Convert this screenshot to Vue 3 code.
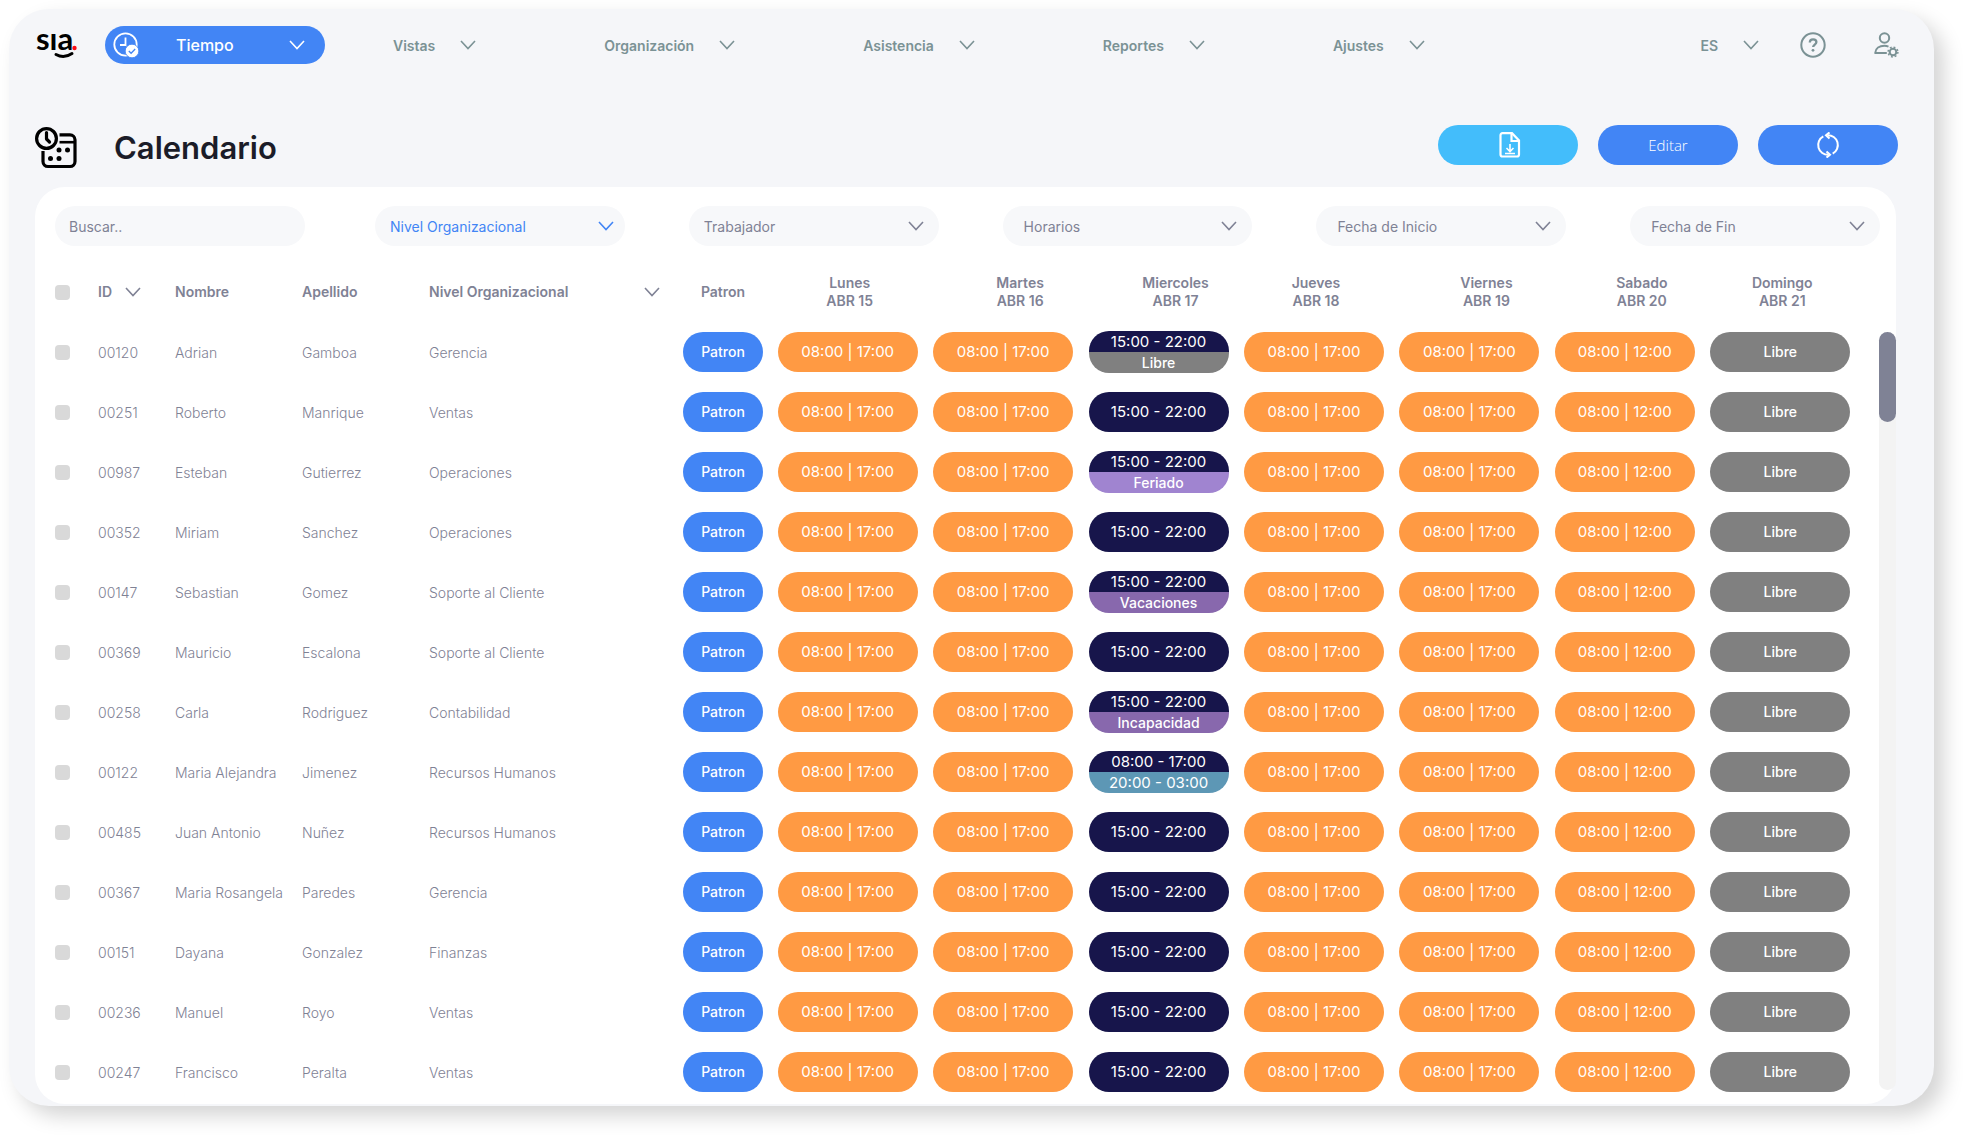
<script setup>
import { ref } from 'vue'

const menu = ['Vistas', 'Organización', 'Asistencia', 'Reportes', 'Ajustes']

const filters = [
  { id: 'nivel', label: 'Nivel Organizacional', kind: 'active' },
  { id: 'trabajador', label: 'Trabajador', kind: '' },
  { id: 'horarios', label: 'Horarios', kind: 'inset' },
  { id: 'inicio', label: 'Fecha de Inicio', kind: 'inset' },
  { id: 'fin', label: 'Fecha de Fin', kind: 'inset' },
]

const days = [
  { name: 'Lunes', date: 'ABR 15', shifted: false },
  { name: 'Martes', date: 'ABR 16', shifted: true },
  { name: 'Miercoles', date: 'ABR 17', shifted: true },
  { name: 'Jueves', date: 'ABR 18', shifted: false },
  { name: 'Viernes', date: 'ABR 19', shifted: true },
  { name: 'Sabado', date: 'ABR 20', shifted: true },
  { name: 'Domingo', date: 'ABR 21', shifted: false },
]

const night = '15:00 - 22:00'
const people = [
  ['00120', 'Adrian', 'Gamboa', 'Gerencia', night, 'Libre', 'free'],
  ['00251', 'Roberto', 'Manrique', 'Ventas', night],
  ['00987', 'Esteban', 'Gutierrez', 'Operaciones', night, 'Feriado', 'holiday'],
  ['00352', 'Miriam', 'Sanchez', 'Operaciones', night],
  ['00147', 'Sebastian', 'Gomez', 'Soporte al Cliente', night, 'Vacaciones', 'leave'],
  ['00369', 'Mauricio', 'Escalona', 'Soporte al Cliente', night],
  ['00258', 'Carla', 'Rodriguez', 'Contabilidad', night, 'Incapacidad', 'leave'],
  ['00122', 'Maria Alejandra', 'Jimenez', 'Recursos Humanos', '08:00 - 17:00', '20:00 - 03:00', 'extra'],
  ['00485', 'Juan Antonio', 'Nuñez', 'Recursos Humanos', night],
  ['00367', 'Maria Rosangela', 'Paredes', 'Gerencia', night],
  ['00151', 'Dayana', 'Gonzalez', 'Finanzas', night],
  ['00236', 'Manuel', 'Royo', 'Ventas', night],
  ['00247', 'Francisco', 'Peralta', 'Ventas', night],
].map(([id, name, surname, level, shift, second, tone]) => ({
  id, name, surname, level,
  week: [
    { text: '08:00 | 17:00', tone: 'day' },
    { text: '08:00 | 17:00', tone: 'day' },
    { text: shift, tone: 'night', second, secondTone: tone },
    { text: '08:00 | 17:00', tone: 'day' },
    { text: '08:00 | 17:00', tone: 'day' },
    { text: '08:00 | 12:00', tone: 'day' },
    { text: 'Libre', tone: 'free' },
  ],
}))

const search = ref('')
</script>

<template>
  <div class="shell">
    <header class="topbar">
      <svg class="logo" width="44" height="52" viewBox="0 0 44 52" role="img" aria-label="sia">
        <text x="1" y="31" class="logo-text">sıa</text>
        <path d="M21 35.500 Q29 40 37 34.500" fill="none" stroke="#000" stroke-width="3" stroke-linecap="round" />
        <circle cx="39.500" cy="29" r="2.200" fill="#fb0d16" />
      </svg>
      <button class="module" type="button">
        <svg width="26" height="26" viewBox="0 0 26 26" fill="none">
          <circle cx="12.500" cy="12.500" r="11.200" stroke="#fff" stroke-width="1.800" />
          <path d="M12.500 5.500V13H7" stroke="#fff" stroke-width="1.800" />
          <circle cx="19" cy="19" r="6.800" fill="#fff" stroke="#4285f5" stroke-width="0.800" />
          <path d="M15.800 19l2.300 2.300 4.100-4.300" stroke="#4285f5" stroke-width="1.300" />
        </svg>
        <span class="module-name">Tiempo</span>
        <svg class="chevron" viewBox="0 0 16 10"><path d="M1 1l7 7.500L15 1" /></svg>
      </button>
      <nav class="menu">
        <button v-for="item in menu" :key="item" class="menu-item" type="button">
          {{ item }}
          <svg class="chevron" viewBox="0 0 16 10"><path d="M1 1l7 7.500L15 1" /></svg>
        </button>
      </nav>
      <div class="account">
        <button class="menu-item" type="button">
          ES
          <svg class="chevron" viewBox="0 0 16 10"><path d="M1 1l7 7.500L15 1" /></svg>
        </button>
        <button class="icon-button help" type="button" aria-label="Ayuda">
          <svg width="26" height="26" viewBox="0 0 26 26" fill="none" stroke="currentColor" stroke-width="2">
            <circle cx="13" cy="13" r="11.700" />
            <path d="M9.800 10.600c0-2 1.400-3.300 3.300-3.300s3.300 1.100 3.300 2.800c0 2.400-3.300 2.500-3.300 5" stroke-width="2.300" />
            <circle cx="13" cy="18.300" r="1.400" fill="currentColor" stroke="none" />
          </svg>
        </button>
        <button class="icon-button" type="button" aria-label="Cuenta">
          <svg width="26" height="26" viewBox="0 0 26 26" fill="none" stroke="currentColor" stroke-width="2">
            <circle cx="11.500" cy="6" r="4.700" />
            <path d="M15.500 14.600c-1.200-.5-2.500-.8-4-.8-5 0-9 2.600-9.300 7.200h11.600" stroke-linejoin="round" />
            <circle cx="20" cy="20" r="3.300" stroke-width="2" />
            <circle cx="20" cy="20" r="4.900" stroke-width="1.500" stroke-dasharray="1.900 1.948" />
          </svg>
        </button>
      </div>
    </header>

    <section class="heading">
      <div class="title">
        <svg width="42" height="42" viewBox="0 0 42 42" fill="none" stroke="#000" stroke-width="3.200">
          <circle cx="11.500" cy="11.500" r="9.900" />
          <path d="M11.500 5.500v6.500l3 3" stroke-linecap="round" stroke-linejoin="round" />
          <path d="M24.500 7.800H35a5 5 0 0 1 5 5V34.500a5 5 0 0 1-5 5H13a5 5 0 0 1-5-5V24" />
          <path d="M24.500 15.200H40" stroke-width="2.600" />
          <g fill="#000" stroke="none">
            <circle cx="24" cy="23" r="2.500" /><circle cx="32.500" cy="23" r="2.500" />
            <circle cx="15.500" cy="31.500" r="2.500" /><circle cx="24" cy="31.500" r="2.500" />
          </g>
        </svg>
        <h1>Calendario</h1>
      </div>
      <div class="actions">
        <button class="action light" type="button" aria-label="Descargar">
          <svg width="26" height="26" viewBox="-4 0 26 26" fill="none" stroke="#fff" stroke-width="2.200">
            <path d="M3.500 1.200H13L20 8.500V22.500a2 2 0 0 1-2 2H3.500a2 2 0 0 1-2-2V3.200a2 2 0 0 1 2-2z" />
            <path d="M12.500 1.500V9H20" />
            <path d="M11 12v7M7.500 16l3.500 3.500 3.500-3.500M6 21.500h10" stroke-width="1.600" />
          </svg>
        </button>
        <button class="action" type="button">Editar</button>
        <button class="action" type="button" aria-label="Actualizar">
          <svg width="24" height="26" viewBox="0 0 24 26" fill="none" stroke="#fff" stroke-width="2">
            <path d="M7.300 4.400A9.800 9.800 0 0 0 12.500 22.800" />
            <path d="M11.500 3.200A9.800 9.800 0 0 1 16.700 21.600" />
            <path d="M13.500 .4l-3.500 2.900 3.500 3.100M10.500 25.600l3.500-2.900-3.500-3.100" />
          </svg>
        </button>
      </div>
    </section>

    <main class="panel">
      <form class="filters" @submit.prevent>
        <input v-model="search" class="field" type="search" placeholder="Buscar.." aria-label="Buscar" />
        <div class="selects">
          <div v-for="f in filters" :key="f.id" class="select" :class="f.kind">
            <select class="field" :id="f.id" :aria-label="f.label">
              <option>{{ f.label }}</option>
            </select>
            <svg class="chevron" viewBox="0 0 16 10"><path d="M1 1l7 7.500L15 1" /></svg>
          </div>
        </div>
      </form>

      <div class="board">
        <table>
          <colgroup>
            <col class="c-check" /><col class="c-id" /><col class="c-name" /><col class="c-name" />
            <col class="c-level" /><col class="c-pattern" />
            <col v-for="d in days" :key="d.date" />
          </colgroup>
          <thead>
            <tr>
              <th><input type="checkbox" aria-label="Seleccionar todos" /></th>
              <th>
                <div class="sort id">ID <svg class="chevron" viewBox="0 0 16 10"><path d="M1 1l7 7.500L15 1" /></svg></div>
              </th>
              <th>Nombre</th>
              <th>Apellido</th>
              <th>
                <div class="sort level">
                  Nivel Organizacional
                  <svg class="chevron" viewBox="0 0 16 10"><path d="M1 1l7 7.500L15 1" /></svg>
                </div>
              </th>
              <th class="center">Patron</th>
              <th v-for="d in days" :key="d.date" class="center weekday" :class="{ shifted: d.shifted }">
                {{ d.name }}<br />{{ d.date }}
              </th>
            </tr>
          </thead>
          <tbody>
            <tr v-for="p in people" :key="p.id">
              <td><input type="checkbox" :aria-label="'Seleccionar ' + p.name" /></td>
              <td>{{ p.id }}</td>
              <td>{{ p.name }}</td>
              <td>{{ p.surname }}</td>
              <td>{{ p.level }}</td>
              <td class="center"><button class="pattern" type="button">Patron</button></td>
              <td v-for="(s, i) in p.week" :key="i" class="center">
                <div v-if="s.second" class="split">
                  <span :class="s.tone">{{ s.text }}</span>
                  <span :class="s.secondTone">{{ s.second }}</span>
                </div>
                <div v-else class="shift" :class="s.tone">{{ s.text }}</div>
              </td>
            </tr>
          </tbody>
        </table>
        <div class="track"><div class="thumb"></div></div>
      </div>
    </main>
  </div>
</template>

<style>
body {
  margin: 0;
  background: #fff;
}
</style>

<style scoped>
* {
  box-sizing: border-box;
}

.shell {
  margin: 9px 44px 40px 9px;
  padding: 17px 38px 2px 26px;
  border-radius: 40px;
  background: #f5f6f9;
  box-shadow: 10px 10px 20px rgba(0, 0, 0, 0.17);
  font-family: Inter, 'Liberation Sans', sans-serif;
  font-size: 14px;
  color: #7f8295;
}

button {
  margin: 0;
  padding: 0;
  border: 0;
  background: none;
  font: inherit;
  color: inherit;
  cursor: pointer;
}

svg {
  display: block;
  flex: none;
}

.chevron {
  width: 16px;
  height: 10px;
  fill: none;
  stroke: currentColor;
  stroke-width: 1.6;
}

.topbar {
  display: flex;
  align-items: center;
  height: 38px;
  margin-right: -3px;
}

.logo-text {
  font-family: Lato, sans-serif;
  font-size: 31px;
  font-weight: 700;
}

.module {
  display: flex;
  align-items: center;
  width: 220px;
  height: 38px;
  margin-left: 26px;
  padding: 0 20px 0 8px;
  border-radius: 19px;
  background: #4285f5;
  color: #fff;
  font-size: 16px;
  font-weight: 500;
}

.module-name {
  flex: 1;
  padding-left: 37px;
  text-align: left;
}

.menu {
  display: flex;
  gap: 128px;
  margin-left: 68px;
}

.menu-item {
  display: flex;
  align-items: center;
  gap: 25px;
  color: #7b9295;
  font-weight: 600;
}

.account {
  display: flex;
  align-items: center;
  margin-left: auto;
}

.icon-button {
  color: #7b9295;
}

.help {
  margin: 0 47px 0 41px;
}

.heading {
  display: flex;
  justify-content: space-between;
  align-items: flex-start;
  margin: 61px -2px 0 0;
}

.title {
  display: flex;
  align-items: center;
  gap: 37px;
  padding-top: 2px;
}

h1 {
  margin: 0;
  font-size: 31px;
  line-height: 42px;
  font-weight: 600;
  color: #1b1c28;
}

.actions {
  display: flex;
  gap: 20px;
}

.action {
  display: flex;
  align-items: center;
  justify-content: center;
  width: 140px;
  height: 40px;
  border-radius: 20px;
  background: #4285f5;
  color: #fff;
  font-family: 'Open Sans', 'Noto Sans', sans-serif;
  font-size: 15px;
  font-weight: 300;
}

.light {
  background: #43bdfb;
}

.panel {
  margin-top: 18px;
  padding: 19px 0 2px 20px;
  border-radius: 30px;
  background: #fff;
}

.filters {
  display: flex;
  gap: 70px;
  padding-right: 16px;
}

.filters > .field {
  flex: 0 0 250px;
  padding: 0 14px;
}

.selects {
  display: flex;
  flex: 1;
  gap: 64px;
}

.select {
  position: relative;
  flex: 1;
}

.select .chevron {
  position: absolute;
  top: 15px;
  right: 15px;
  pointer-events: none;
}

.select.active .chevron {
  right: 11px;
}

.field {
  appearance: none;
  width: 100%;
  height: 40px;
  margin: 0;
  padding: 0 15px;
  border: 0;
  border-radius: 20px;
  background: #f7f8fa;
  font: inherit;
  color: inherit;
}

.field::placeholder {
  color: #7f8295;
  opacity: 1;
}

.inset .field {
  padding-left: 21px;
}

.active {
  color: #4285f5;
}

.board {
  display: flex;
  gap: 21px;
  margin-top: 16px;
}

table {
  flex: 1;
  width: 100%;
  table-layout: fixed;
  border-collapse: collapse;
}

.c-check { width: 43px; }
.c-id { width: 77px; }
.c-name { width: 127px; }
.c-level { width: 247px; }
.c-pattern { width: 94px; }

th,
td {
  height: 60px;
  padding: 0;
  text-align: left;
  vertical-align: middle;
  white-space: nowrap;
}

th {
  line-height: 18px;
  font-weight: 600;
}

td {
  font-weight: 300;
}

th.center,
td.center {
  text-align: center;
}

.weekday {
  padding-left: 4px;
}

.shifted {
  padding-left: 34px;
}

.sort {
  display: flex;
  align-items: center;
}

.id {
  gap: 13px;
}

.level {
  justify-content: space-between;
  padding-right: 16px;
}

input[type='checkbox'] {
  display: block;
  appearance: none;
  width: 15px;
  height: 15px;
  margin: 0;
  border-radius: 4px;
  background: #d9d9d9;
}

.pattern,
.shift {
  height: 40px;
  border-radius: 20px;
  line-height: 40px;
  font-weight: 500;
  color: #fff;
}

.pattern {
  width: 80px;
  background: #4285f5;
}

.shift,
.split {
  max-width: 140px;
  margin: 0 auto;
}

.split {
  overflow: hidden;
  border-radius: 20px;
  line-height: 21px;
  font-weight: 500;
  color: #fff;
}

.split span {
  display: block;
}

.day,
.night,
.extra {
  font-size: 15px;
  font-weight: 400;
}

.day { background: #ff9a43; }
.night { background: #17154b; }
.free { background: #808080; }
.holiday { background: #a084d0; }
.leave { background: #8868ad; }
.extra { background: #5d97b5; }

.track {
  flex: 0 0 17px;
  margin: 70px 0 12px;
  border-radius: 9px;
  background: #f3f3f3;
}

.thumb {
  height: 90px;
  border-radius: 9px;
  background: #7f8295;
}
</style>
